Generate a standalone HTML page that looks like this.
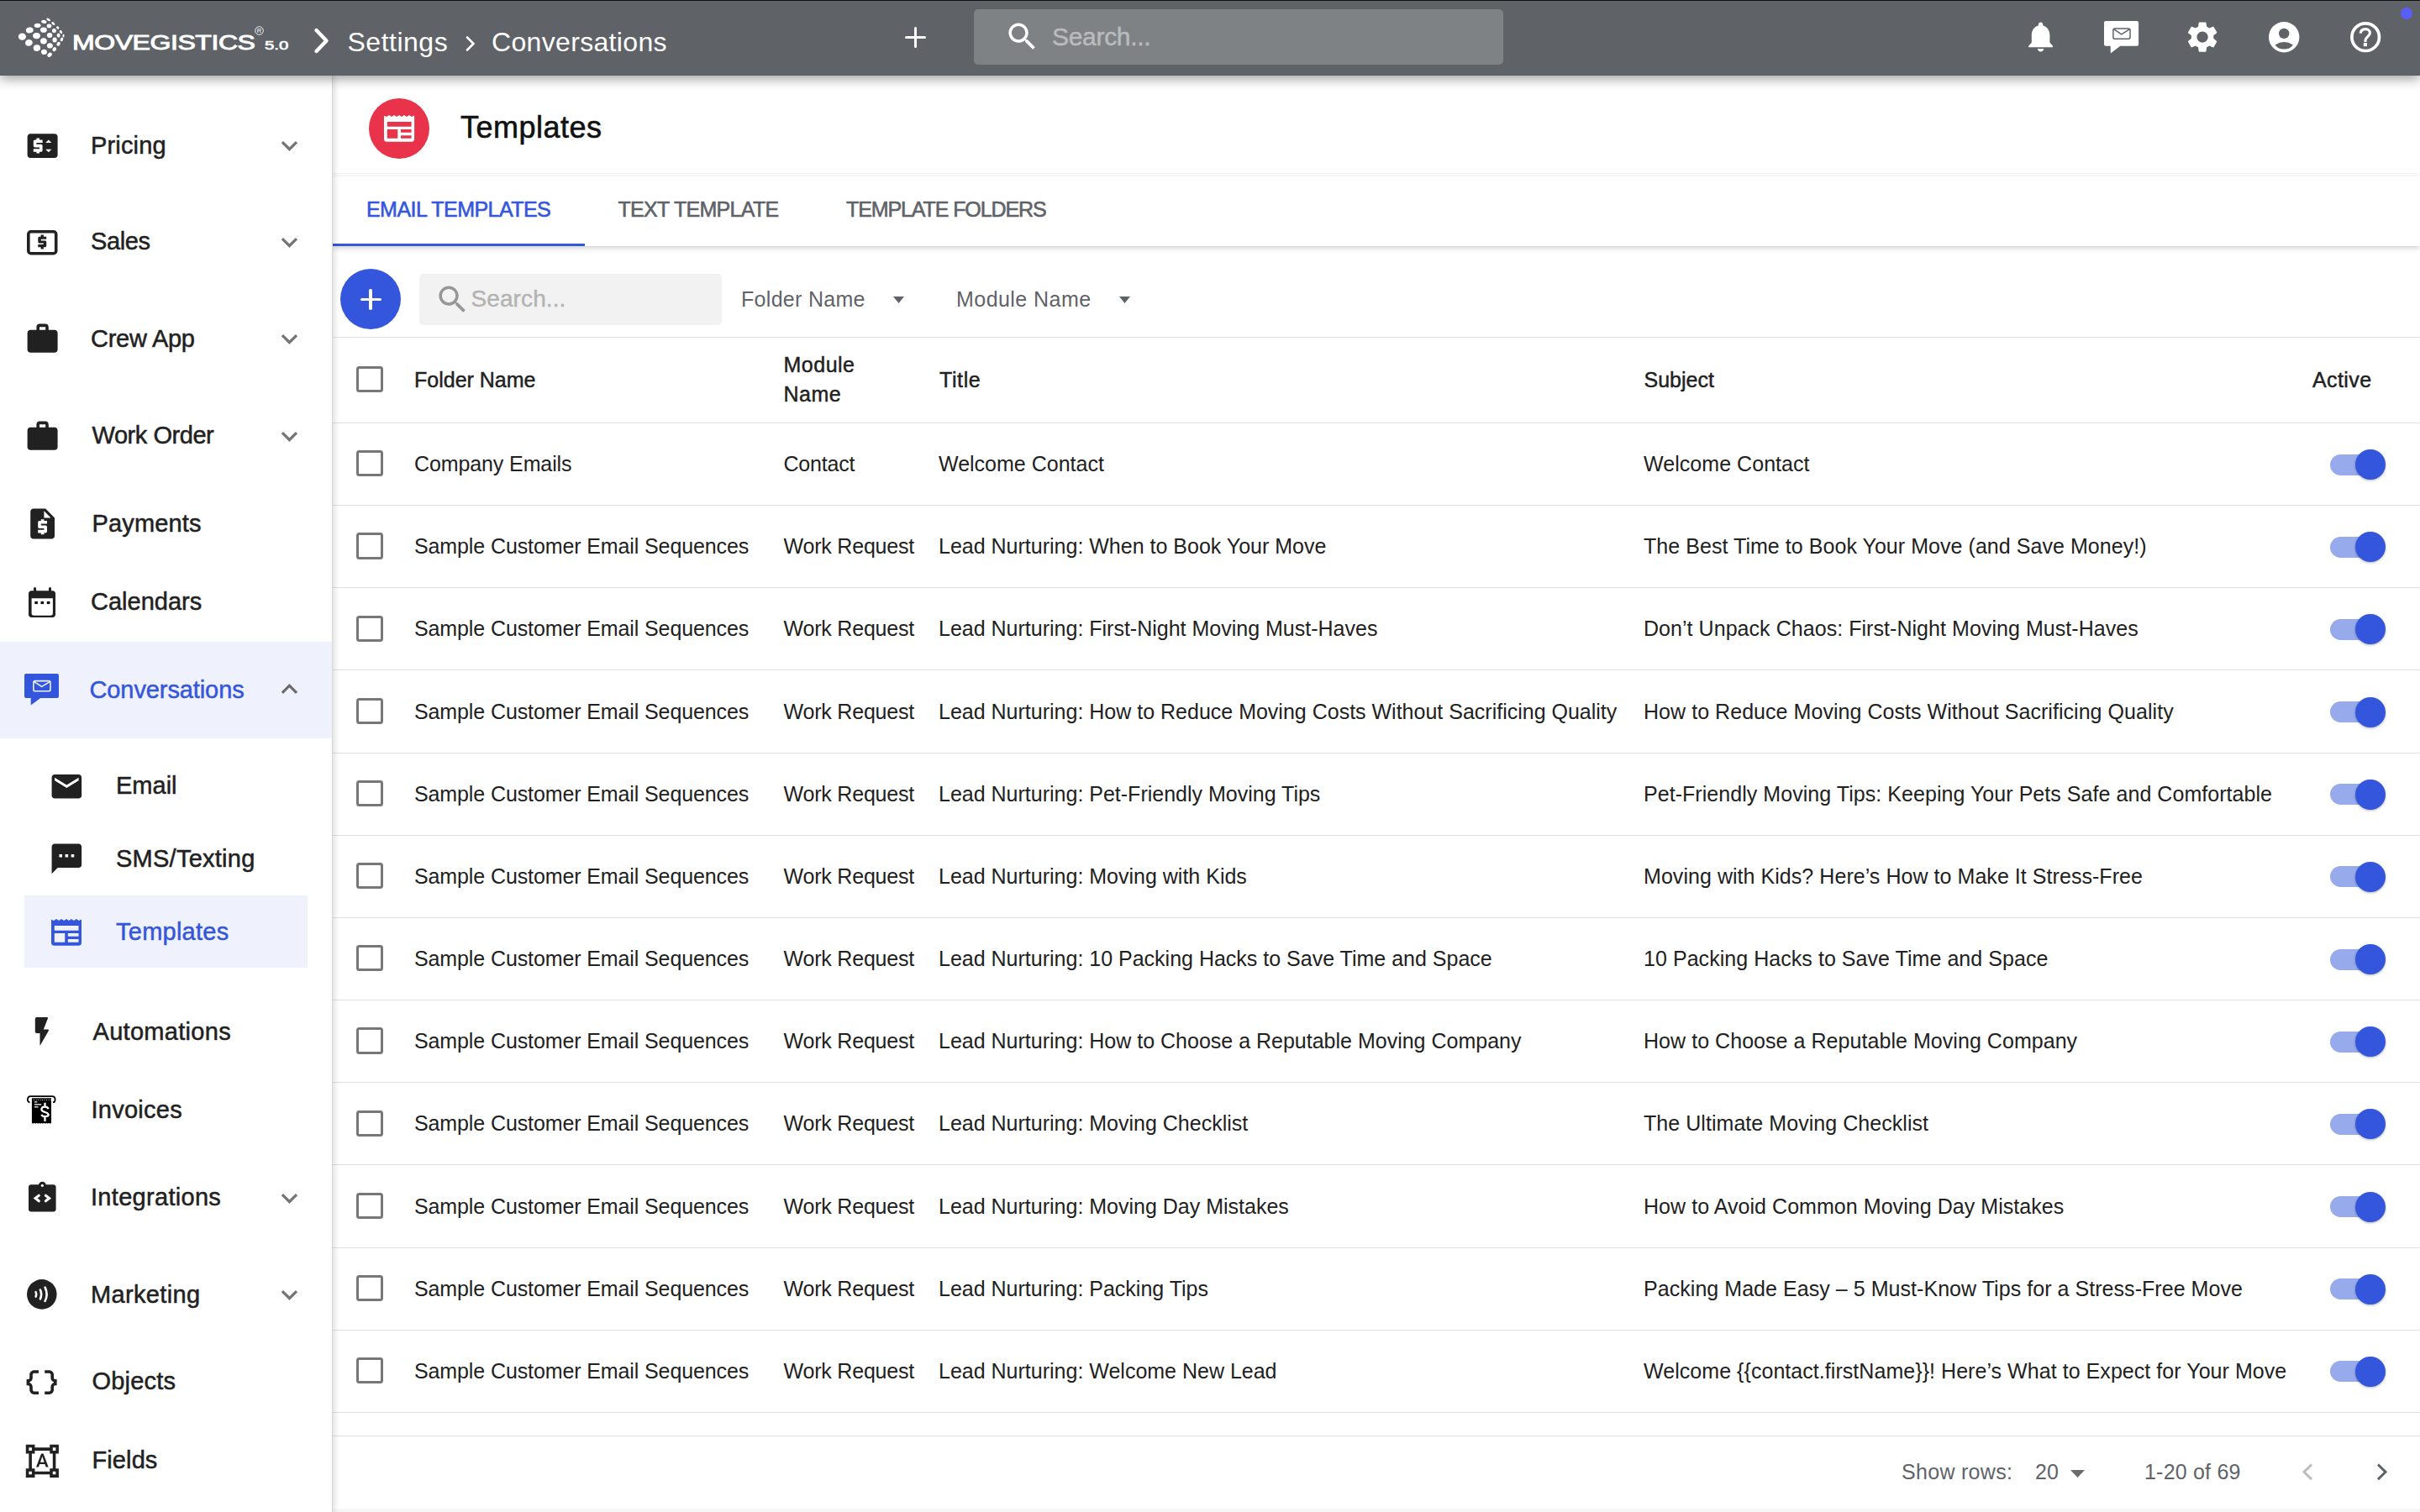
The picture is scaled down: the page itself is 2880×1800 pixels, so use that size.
<!DOCTYPE html><html><head><meta charset="utf-8"><style>
html,body{margin:0;padding:0;width:2880px;height:1800px;overflow:hidden;background:#fff;}
body{position:relative;font-family:"Liberation Sans", sans-serif;}
.t{position:absolute;white-space:nowrap;line-height:1;}
.i{position:absolute;overflow:visible;}
.b{position:absolute;}
</style></head><body>
<div class="b" style="left:0;top:90px;width:395px;height:1710px;background:#fff;border-right:1px solid #d9d9d9;box-shadow:2px 0 7px rgba(0,0,0,0.14);z-index:1"></div>
<div id="sb" class="b" style="left:0;top:0;width:396px;height:1800px;z-index:2">
<div class="b" style="left:0;top:764px;width:395px;height:115px;background:#eff2fd"></div>
<div class="b" style="left:29px;top:1066px;width:337px;height:86px;background:#eff2fd"></div>
<div class="t" style="left:108.0px;top:158.8px;font-size:29px;color:#212121;-webkit-text-stroke:0.5px #212121;letter-spacing:0.15px;">Pricing</div>
<svg class="i" style="left:325.0px;top:154.0px;width:38.9px;height:38.9px;" viewBox="0 0 24 24"><path fill="#757575" d="M16.59 8.59L12 13.17 7.41 8.59 6 10l6 6 6-6z"/></svg>
<div class="t" style="left:108.0px;top:273.3px;font-size:29px;color:#212121;-webkit-text-stroke:0.5px #212121;letter-spacing:-0.4px;">Sales</div>
<svg class="i" style="left:325.0px;top:268.5px;width:38.9px;height:38.9px;" viewBox="0 0 24 24"><path fill="#757575" d="M16.59 8.59L12 13.17 7.41 8.59 6 10l6 6 6-6z"/></svg>
<div class="t" style="left:108.0px;top:388.8px;font-size:29px;color:#212121;-webkit-text-stroke:0.5px #212121;letter-spacing:-0.25px;">Crew App</div>
<svg class="i" style="left:325.0px;top:384.0px;width:38.9px;height:38.9px;" viewBox="0 0 24 24"><path fill="#757575" d="M16.59 8.59L12 13.17 7.41 8.59 6 10l6 6 6-6z"/></svg>
<div class="t" style="left:109.5px;top:504.3px;font-size:29px;color:#212121;-webkit-text-stroke:0.5px #212121;letter-spacing:-0.45px;">Work Order</div>
<svg class="i" style="left:325.0px;top:499.5px;width:38.9px;height:38.9px;" viewBox="0 0 24 24"><path fill="#757575" d="M16.59 8.59L12 13.17 7.41 8.59 6 10l6 6 6-6z"/></svg>
<div class="t" style="left:109.5px;top:608.8px;font-size:29px;color:#212121;-webkit-text-stroke:0.5px #212121;letter-spacing:0.15px;">Payments</div>
<div class="t" style="left:108.0px;top:702.3px;font-size:29px;color:#212121;-webkit-text-stroke:0.5px #212121;">Calendars</div>
<div class="t" style="left:106.5px;top:806.8px;font-size:29px;color:#3456dc;-webkit-text-stroke:0.5px #3456dc;letter-spacing:-0.1px;">Conversations</div>
<svg class="i" style="left:325.0px;top:801.1px;width:38.9px;height:38.9px;" viewBox="0 0 24 24"><path fill="#6b6b6b" d="M12 8l-6 6 1.41 1.41L12 10.83l4.59 4.58L18 14z"/></svg>
<div class="t" style="left:110.5px;top:1213.9px;font-size:29px;color:#212121;-webkit-text-stroke:0.5px #212121;letter-spacing:0.3px;">Automations</div>
<div class="t" style="left:108.5px;top:1306.5px;font-size:29px;color:#212121;-webkit-text-stroke:0.5px #212121;letter-spacing:0.25px;">Invoices</div>
<div class="t" style="left:108.0px;top:1411.3px;font-size:29px;color:#212121;-webkit-text-stroke:0.5px #212121;letter-spacing:0.3px;">Integrations</div>
<svg class="i" style="left:325.0px;top:1406.5px;width:38.9px;height:38.9px;" viewBox="0 0 24 24"><path fill="#757575" d="M16.59 8.59L12 13.17 7.41 8.59 6 10l6 6 6-6z"/></svg>
<div class="t" style="left:108.0px;top:1526.6px;font-size:29px;color:#212121;-webkit-text-stroke:0.5px #212121;letter-spacing:0.35px;">Marketing</div>
<svg class="i" style="left:325.0px;top:1521.8px;width:38.9px;height:38.9px;" viewBox="0 0 24 24"><path fill="#757575" d="M16.59 8.59L12 13.17 7.41 8.59 6 10l6 6 6-6z"/></svg>
<div class="t" style="left:109.5px;top:1630.3px;font-size:29px;color:#212121;-webkit-text-stroke:0.5px #212121;letter-spacing:0.2px;">Objects</div>
<div class="t" style="left:109.5px;top:1724.1px;font-size:29px;color:#212121;-webkit-text-stroke:0.5px #212121;letter-spacing:0.1px;">Fields</div>
<div class="t" style="left:138.0px;top:921.4px;font-size:29px;color:#212121;-webkit-text-stroke:0.5px #212121;">Email</div>
<div class="t" style="left:138.0px;top:1007.9px;font-size:29px;color:#212121;-webkit-text-stroke:0.5px #212121;letter-spacing:0.25px;">SMS/Texting</div>
<div class="t" style="left:138.0px;top:1094.5px;font-size:29px;color:#3456dc;-webkit-text-stroke:0.5px #3456dc;letter-spacing:0.25px;">Templates</div>
<svg class="i" style="left:28.6px;top:151.8px;width:43.2px;height:43.2px;" viewBox="0 0 24 24"><path fill="#212121" d="M20 4H4c-1.11 0-1.99.89-1.99 2L2 18c0 1.11.89 2 2 2h16c1.11 0 2-.89 2-2V6c0-1.11-.89-2-2-2zm-8 6H8v1h3c.55 0 1 .45 1 1v3c0 .55-.45 1-1 1h-1v1H8v-1H6v-2h4v-1H7c-.55 0-1-.45-1-1V9c0-.55.45-1 1-1h1V7h2v1h2v2zm4 6.25l-2-2h4l-2 2zM14 10l2-2 2 2h-4z"/></svg>
<svg class="i" style="left:32.0px;top:273.5px;width:36.5px;height:29.5px;" viewBox="0 0 36.5 29.5"><rect x="1.8" y="1.8" width="32.9" height="25.9" rx="3" fill="none" stroke="#212121" stroke-width="3.6"/><path fill="#212121" d="M16.6 5.5h3.3v2.2h3.3v3.1h-6.4v1.6h4.6c1.2 0 1.8.6 1.8 1.8v4.2c0 1.2-.6 1.8-1.8 1.8h-1.5v2.2h-3.3v-2.2h-3.3v-3.1h6.4v-1.6h-4.6c-1.2 0-1.8-.6-1.8-1.8v-4.2c0-1.2.6-1.8 1.8-1.8h1.5z"/></svg>
<svg class="i" style="left:28.6px;top:382.1px;width:43.2px;height:43.2px;" viewBox="0 0 24 24"><path fill="#212121" d="M20 6h-4V4c0-1.11-.89-2-2-2h-4c-1.11 0-2 .89-2 2v2H4c-1.11 0-1.99.89-1.99 2L2 19c0 1.11.89 2 2 2h16c1.11 0 2-.89 2-2V8c0-1.11-.89-2-2-2zm-6 0h-4V4h4v2z"/></svg>
<svg class="i" style="left:28.6px;top:498.1px;width:43.2px;height:43.2px;" viewBox="0 0 24 24"><path fill="#212121" d="M20 6h-4V4c0-1.11-.89-2-2-2h-4c-1.11 0-2 .89-2 2v2H4c-1.11 0-1.99.89-1.99 2L2 19c0 1.11.89 2 2 2h16c1.11 0 2-.89 2-2V8c0-1.11-.89-2-2-2zm-6 0h-4V4h4v2z"/></svg>
<svg class="i" style="left:28.8px;top:601.6px;width:43.2px;height:43.2px;" viewBox="0 0 24 24"><path fill="#212121" d="M14 2H6c-1.1 0-1.99.9-1.99 2L4 20c0 1.1.89 2 1.99 2H18c1.1 0 2-.9 2-2V8l-6-6zm1 10h-4v1h3c.55 0 1 .45 1 1v3c0 .55-.45 1-1 1h-1v1h-2v-1H9v-2h4v-1h-3c-.55 0-1-.45-1-1v-3c0-.55.45-1 1-1h1V9h2v1h2v2zm-2-4V3.5L17.5 8H13z"/></svg>
<svg class="i" style="left:33.9px;top:699.4px;width:32.5px;height:36.1px;" viewBox="0 0 32.5 36.1"><path fill="#212121" d="M6 4.3V1.6a1.5 1.5 0 0 1 3 0V4.3H24V1.6a1.5 1.5 0 0 1 3 0V4.3h1.5c2.2 0 3.5 1.4 3.5 3.5v24.8c0 2.1-1.4 3.5-3.5 3.5h-25c-2.1 0-3.5-1.4-3.5-3.5V7.8c0-2.1 1.4-3.5 3.5-3.5zM3.6 13.3v17.8c0 1.8 .9 2.7 2.7 2.7h19.9c1.8 0 2.7-.9 2.7-2.7V13.3z"/><rect x="7.3" y="16.9" width="3.6" height="3.2" fill="#111"/><rect x="14.5" y="16.9" width="3.6" height="3.2" fill="#111"/><rect x="21.8" y="16.9" width="3.6" height="3.2" fill="#111"/></svg>
<svg class="i" style="left:28.9px;top:802.0px;width:41.0px;height:37.6px;" viewBox="0 0 41 37.6"><path fill="#3456dc" d="M2 0H39.00Q41 0 41 2V26.95Q41 28.95 39.00 28.95H19.27L7.79 37.6L7.67 28.95H2Q0 28.95 0 26.95V2Q0 0 2 0Z"/><rect x="10.87" y="8.65" width="20.09" height="12.03" rx="2.05" fill="none" stroke="#eff2fd" stroke-width="1.6"/><path d="M11.68 9.59L20.71 15.42L30.13 9.59" fill="none" stroke="#eff2fd" stroke-width="1.6"/></svg>
<svg class="i" style="left:57.5px;top:914.9px;width:42.7px;height:42.7px;" viewBox="0 0 24 24"><path fill="#212121" d="M20 4H4c-1.1 0-1.99.9-1.99 2L2 18c0 1.1.9 2 2 2h16c1.1 0 2-.9 2-2V6c0-1.1-.9-2-2-2zm0 4l-8 5-8-5V6l8 5 8-5v2z"/></svg>
<svg class="i" style="left:57.5px;top:1001.0px;width:42.7px;height:42.7px;" viewBox="0 0 24 24"><path fill="#212121" d="M20 2H4c-1.1 0-1.99.9-1.99 2L2 22l4-4h14c1.1 0 2-.9 2-2V4c0-1.1-.9-2-2-2zM9 11H7V9h2v2zm4 0h-2V9h2v2zm4 0h-2V9h2v2z"/></svg>
<svg class="i" style="left:61.0px;top:1093.9px;width:36.0px;height:31.7px;" viewBox="0 0 36.1 31.8"><path fill="#3456dc" fill-rule="evenodd" d="M0 0.8L3.0 2.1L6.1 0L9.1 2.1L12.0 0L15.2 2.1L18.1 0L21.0 2.1L24.0 0L27.0 2.1L30.0 0L32.9 2.1L36.1 0.6V28.3Q36.1 31.8 32.6 31.8H3.5Q0 31.8 0 28.3ZM3.8 8.1H32.6V13.8H3.8Z M3.8 17H16.3V27.8H3.8Z M19.9 17H32.6V20.8H19.9Z M19.9 24.2H32.6V27.8H19.9Z"/></svg>
<svg class="i" style="left:40.7px;top:1210.6px;width:17.4px;height:33.7px;" viewBox="0 0 17.4 33.7"><path fill="#212121" d="M0.8 1.8Q0.8 0 2.6 0H14.9Q16.4 0 15.9 1.4L10.8 14.5H16Q17.7 14.5 16.9 16L7 33.3Q6.5 34 6.5 33.1V19.1H2.6Q0.8 19.1 0.8 17.3Z"/></svg>
<svg class="i" style="left:32.0px;top:1304.0px;width:35.0px;height:34.0px;" viewBox="0 0 35 34"><path d="M3.6 8.3C1.5 8.3 0.9 6.8 0.9 5C0.9 2.5 2.2 1.2 4.5 1.2H30C32.3 1.2 33.6 2.5 33.6 5C33.6 6.8 33 8.3 30.9 8.3" fill="none" stroke="#000" stroke-width="1.8"/><path fill="#000" d="M5.9 3.3H29V33.5H5.9Z"/><circle cx="5.90" cy="33.9" r="0.9" fill="#fff"/><circle cx="8.80" cy="33.9" r="0.9" fill="#fff"/><circle cx="11.70" cy="33.9" r="0.9" fill="#fff"/><circle cx="14.60" cy="33.9" r="0.9" fill="#fff"/><circle cx="17.50" cy="33.9" r="0.9" fill="#fff"/><circle cx="20.40" cy="33.9" r="0.9" fill="#fff"/><circle cx="23.30" cy="33.9" r="0.9" fill="#fff"/><circle cx="26.20" cy="33.9" r="0.9" fill="#fff"/><circle cx="29.10" cy="33.9" r="0.9" fill="#fff"/><rect x="8.20" y="4.9" width="0.8" height="1" fill="#fff"/><rect x="10.70" y="4.9" width="0.8" height="1" fill="#fff"/><rect x="13.20" y="4.9" width="0.8" height="1" fill="#fff"/><rect x="15.70" y="4.9" width="0.8" height="1" fill="#fff"/><rect x="18.20" y="4.9" width="0.8" height="1" fill="#fff"/><rect x="20.70" y="4.9" width="0.8" height="1" fill="#fff"/><rect x="23.20" y="4.9" width="0.8" height="1" fill="#fff"/><rect x="25.70" y="4.9" width="0.8" height="1" fill="#fff"/><rect x="28.20" y="4.9" width="0.8" height="1" fill="#fff"/><path d="M9 7.8H12.3M9 10.8H17.2M9 13.9H13.5" stroke="#fff" stroke-width="1.3"/><path d="M25.6 16.2C25 14.6 23.5 13.7 21.5 13.7C19 13.7 17.4 15 17.4 16.8C17.4 18.6 19 19.3 21.5 20C24 20.7 25.7 21.6 25.7 23.3C25.7 25 24 25.1 21.5 25.1C19.3 25.1 17.9 24.3 17.4 22.8M21.5 8.8V13.7M21.5 25.1V31" fill="none" stroke="#fff" stroke-width="2.3"/></svg>
<svg class="i" style="left:34.0px;top:1407.0px;width:32.7px;height:35.5px;" viewBox="0 0 32.7 35.5"><path fill="#212121" d="M3 3.2H29.6c1.7 0 3 1.3 3 3V32.4c0 1.7-1.3 3-3 3H3c-1.7 0-3-1.3-3-3V6.2c0-1.7 1.3-3 3-3z"/><circle cx="16.4" cy="4.4" r="4.6" fill="#212121"/><circle cx="16.4" cy="4.3" r="1.6" fill="#fff"/><path d="M12.3 16.2L8.1 19.5L12.3 22.8M20.4 16.2L24.6 19.5L20.4 22.8" fill="none" stroke="#fff" stroke-width="3.1" stroke-linecap="round"/></svg>
<svg class="i" style="left:32.0px;top:1523.3px;width:35.6px;height:35.7px;" viewBox="0 0 35.6 35.7"><circle cx="17.8" cy="17.85" r="17.8" fill="#212121"/><path d="M10.6 15.2Q11.9 17.9 10.6 20.6M15.9 12.5Q18.4 17.9 15.9 23.4M21.6 9.6Q25.7 17.9 21.6 26" fill="none" stroke="#fff" stroke-width="2.6" stroke-linecap="round"/></svg>
<svg class="i" style="left:28.4px;top:1623.8px;width:43.2px;height:43.2px;" viewBox="0 0 24 24"><path fill="#212121" d="M4 7v2c0 .55-.45 1-1 1H2v4h1c.55 0 1 .45 1 1v2c0 1.65 1.35 3 3 3h3v-2H7c-.55 0-1-.45-1-1v-2c0-1.3-.84-2.42-2-2.83v-.34C5.16 11.42 6 10.3 6 9V7c0-.55.45-1 1-1h3V4H7C5.35 4 4 5.35 4 7zm17 3c-.55 0-1-.45-1-1V7c0-1.65-1.35-3-3-3h-3v2h3c.55 0 1 .45 1 1v2c0 1.3.84 2.42 2 2.83v.34c-1.16.41-2 1.52-2 2.83v2c0 .55-.45 1-1 1h-3v2h3c1.65 0 3-1.35 3-3v-2c0-.55.45-1 1-1h1v-4h-1z"/></svg>
<svg class="i" style="left:29.0px;top:1718.0px;width:42.7px;height:42.7px;" viewBox="0 0 24 24"><path fill="#212121" d="M23 7V1h-6v2H7V1H1v6h2v10H1v6h6v-2h10v2h6v-6h-2V7h2zM3 3h2v2H3V3zm2 18H3v-2h2v2zm12-2H7v-2H5V7h2V5h10v2h2v10h-2v2zm4 2h-2v-2h2v2zM19 5V3h2v2h-2zm-5.27 9h-3.49l-.73 2H7.89l3.4-9h1.4l3.41 9h-1.63l-.74-2zm-3.04-1.26h2.61L12 8.91l-1.31 3.83z"/></svg>
</div>
<div class="b" style="left:396px;top:206px;width:2484px;height:1px;background:#f8f8f8"></div>
<div class="b" style="left:396px;top:210px;width:2484px;height:83px;background:#fff;box-shadow:0 2px 7px rgba(0,0,0,0.2)"></div>
<div class="b" style="left:439px;top:117px;width:72px;height:72px;border-radius:50%;background:#e8334a"></div>
<svg class="i" style="left:457.0px;top:137.0px;width:36.1px;height:31.8px;" viewBox="0 0 36.1 31.8"><path fill="#fff" fill-rule="evenodd" d="M0 0.8L3.0 2.1L6.1 0L9.1 2.1L12.0 0L15.2 2.1L18.1 0L21.0 2.1L24.0 0L27.0 2.1L30.0 0L32.9 2.1L36.1 0.6V28.3Q36.1 31.8 32.6 31.8H3.5Q0 31.8 0 28.3ZM3.8 8.1H32.6V13.8H3.8Z M3.8 17H16.3V27.8H3.8Z M19.9 17H32.6V20.8H19.9Z M19.9 24.2H32.6V27.8H19.9Z"/></svg>
<div class="t" style="left:548.0px;top:133.9px;font-size:36px;color:#111;-webkit-text-stroke:0.6px #111;letter-spacing:0.5px;">Templates</div>
<div class="t" style="left:436.0px;top:237.1px;font-size:25px;color:#3456dc;-webkit-text-stroke:0.6px #3456dc;letter-spacing:-0.55px;">EMAIL TEMPLATES</div>
<div class="t" style="left:735.5px;top:237.1px;font-size:25px;color:#5f6368;-webkit-text-stroke:0.6px #5f6368;letter-spacing:-0.7px;">TEXT TEMPLATE</div>
<div class="t" style="left:1007.0px;top:237.1px;font-size:25px;color:#5f6368;-webkit-text-stroke:0.6px #5f6368;letter-spacing:-1.1px;">TEMPLATE FOLDERS</div>
<div class="b" style="left:396px;top:290px;width:300px;height:3px;background:#3456dc"></div>
<div class="b" style="left:405px;top:320px;width:72px;height:72px;border-radius:50%;background:#3456dc"></div>
<div class="b" style="left:428.6px;top:354.8px;width:25px;height:3.4px;background:#fff;border-radius:1.7px"></div>
<div class="b" style="left:439.3px;top:344px;width:3.4px;height:25px;background:#fff;border-radius:1.7px"></div>
<div class="b" style="left:499px;top:326px;width:360px;height:61px;background:#f2f2f2;border-radius:5px"></div>
<svg class="i" style="left:516.5px;top:334.7px;width:43.2px;height:43.2px;" viewBox="0 0 24 24"><path fill="#979797" d="M15.5 14h-.79l-.28-.27C15.41 12.59 16 11.11 16 9.5 16 5.91 13.09 3 9.5 3S3 5.91 3 9.5 5.91 16 9.5 16c1.61 0 3.09-.59 4.23-1.57l.27.28v.79l5 4.99L20.49 19l-4.99-5zm-6 0C7.01 14 5 11.99 5 9.5S7.01 5 9.5 5 14 7.01 14 9.5 11.99 14 9.5 14z"/></svg>
<div class="t" style="left:560.5px;top:342.1px;font-size:28px;color:#b3b3b3;-webkit-text-stroke:0.4px #b3b3b3;letter-spacing:0.1px;">Search...</div>
<div class="t" style="left:882.0px;top:343.9px;font-size:25px;color:#5f6368;letter-spacing:0.3px;">Folder Name</div>
<svg class="i" style="left:1063.0px;top:352.7px;width:13.0px;height:8.1px;" viewBox="0 0 13 8.1"><path fill="#5f6368" d="M0 0H13L6.5 8.1Z"/></svg>
<div class="t" style="left:1138.0px;top:343.9px;font-size:25px;color:#5f6368;letter-spacing:0.45px;">Module Name</div>
<svg class="i" style="left:1332.0px;top:352.7px;width:13.0px;height:8.1px;" viewBox="0 0 13 8.1"><path fill="#5f6368" d="M0 0H13L6.5 8.1Z"/></svg>
<div class="b" style="left:396px;top:401px;width:2484px;height:1px;background:#e3e3e3"></div>
<div class="b" style="left:396px;top:503px;width:2484px;height:1px;background:#e0e0e0"></div>
<div class="b" style="left:396px;top:601.0px;width:2484px;height:1px;background:#e0e0e0"></div>
<div class="b" style="left:396px;top:699.2px;width:2484px;height:1px;background:#e0e0e0"></div>
<div class="b" style="left:396px;top:797.3px;width:2484px;height:1px;background:#e0e0e0"></div>
<div class="b" style="left:396px;top:895.5px;width:2484px;height:1px;background:#e0e0e0"></div>
<div class="b" style="left:396px;top:993.7px;width:2484px;height:1px;background:#e0e0e0"></div>
<div class="b" style="left:396px;top:1091.9px;width:2484px;height:1px;background:#e0e0e0"></div>
<div class="b" style="left:396px;top:1190.1px;width:2484px;height:1px;background:#e0e0e0"></div>
<div class="b" style="left:396px;top:1288.2px;width:2484px;height:1px;background:#e0e0e0"></div>
<div class="b" style="left:396px;top:1386.4px;width:2484px;height:1px;background:#e0e0e0"></div>
<div class="b" style="left:396px;top:1484.6px;width:2484px;height:1px;background:#e0e0e0"></div>
<div class="b" style="left:396px;top:1582.8px;width:2484px;height:1px;background:#e0e0e0"></div>
<div class="b" style="left:396px;top:1681.0px;width:2484px;height:1px;background:#e0e0e0"></div>
<div class="b" style="left:396px;top:1709px;width:2484px;height:1px;background:#e0e0e0"></div>
<div class="b" style="left:424.4px;top:436.1px;width:25.3px;height:25.3px;border:3.5px solid #777;border-radius:3.5px"></div>
<div class="t" style="left:493.0px;top:440.0px;font-size:25px;color:#212121;-webkit-text-stroke:0.45px #212121;">Folder Name</div>
<div class="t" style="left:932.5px;top:421.8px;font-size:25px;color:#212121;-webkit-text-stroke:0.45px #212121;letter-spacing:0.5px;">Module</div>
<div class="t" style="left:932.5px;top:457.4px;font-size:25px;color:#212121;-webkit-text-stroke:0.45px #212121;letter-spacing:0.5px;">Name</div>
<div class="t" style="left:1118.0px;top:439.7px;font-size:25px;color:#212121;-webkit-text-stroke:0.45px #212121;letter-spacing:0.6px;">Title</div>
<div class="t" style="left:1956.5px;top:439.5px;font-size:25px;color:#212121;-webkit-text-stroke:0.45px #212121;">Subject</div>
<div class="t" style="left:2752.0px;top:439.9px;font-size:25px;color:#212121;-webkit-text-stroke:0.45px #212121;letter-spacing:0.4px;">Active</div>
<div class="b" style="left:424.4px;top:536.1px;width:25.3px;height:25.3px;border:3.5px solid #777;border-radius:3.5px"></div>
<div class="t" style="left:493.0px;top:539.9px;font-size:25px;color:#212121;letter-spacing:-0.11px;">Company Emails</div>
<div class="t" style="left:932.5px;top:539.9px;font-size:25px;color:#212121;letter-spacing:-0.2px;">Contact</div>
<div class="t" style="left:1117.0px;top:539.9px;font-size:25px;color:#212121;">Welcome Contact</div>
<div class="t" style="left:1956.0px;top:539.9px;font-size:25px;color:#212121;letter-spacing:0.05px;">Welcome Contact</div>
<div class="b" style="left:2773px;top:540.5px;width:64px;height:25px;border-radius:12.5px;background:#97aaec"></div>
<div class="b" style="left:2803px;top:535.0px;width:36px;height:36px;border-radius:50%;background:#3456dc;box-shadow:0 1px 3px rgba(0,0,0,0.3)"></div>
<div class="b" style="left:424.4px;top:634.3px;width:25.3px;height:25.3px;border:3.5px solid #777;border-radius:3.5px"></div>
<div class="t" style="left:493.0px;top:638.1px;font-size:25px;color:#212121;letter-spacing:-0.11px;">Sample Customer Email Sequences</div>
<div class="t" style="left:932.5px;top:638.1px;font-size:25px;color:#212121;letter-spacing:-0.2px;">Work Request</div>
<div class="t" style="left:1117.0px;top:638.1px;font-size:25px;color:#212121;">Lead Nurturing: When to Book Your Move</div>
<div class="t" style="left:1956.0px;top:638.1px;font-size:25px;color:#212121;letter-spacing:0.05px;">The Best Time to Book Your Move (and Save Money!)</div>
<div class="b" style="left:2773px;top:638.6px;width:64px;height:25px;border-radius:12.5px;background:#97aaec"></div>
<div class="b" style="left:2803px;top:633.1px;width:36px;height:36px;border-radius:50%;background:#3456dc;box-shadow:0 1px 3px rgba(0,0,0,0.3)"></div>
<div class="b" style="left:424.4px;top:732.5px;width:25.3px;height:25.3px;border:3.5px solid #777;border-radius:3.5px"></div>
<div class="t" style="left:493.0px;top:736.3px;font-size:25px;color:#212121;letter-spacing:-0.11px;">Sample Customer Email Sequences</div>
<div class="t" style="left:932.5px;top:736.3px;font-size:25px;color:#212121;letter-spacing:-0.2px;">Work Request</div>
<div class="t" style="left:1117.0px;top:736.3px;font-size:25px;color:#212121;">Lead Nurturing: First-Night Moving Must-Haves</div>
<div class="t" style="left:1956.0px;top:736.3px;font-size:25px;color:#212121;letter-spacing:0.05px;">Don’t Unpack Chaos: First-Night Moving Must-Haves</div>
<div class="b" style="left:2773px;top:736.8px;width:64px;height:25px;border-radius:12.5px;background:#97aaec"></div>
<div class="b" style="left:2803px;top:731.3px;width:36px;height:36px;border-radius:50%;background:#3456dc;box-shadow:0 1px 3px rgba(0,0,0,0.3)"></div>
<div class="b" style="left:424.4px;top:830.7px;width:25.3px;height:25.3px;border:3.5px solid #777;border-radius:3.5px"></div>
<div class="t" style="left:493.0px;top:834.5px;font-size:25px;color:#212121;letter-spacing:-0.11px;">Sample Customer Email Sequences</div>
<div class="t" style="left:932.5px;top:834.5px;font-size:25px;color:#212121;letter-spacing:-0.2px;">Work Request</div>
<div class="t" style="left:1117.0px;top:834.5px;font-size:25px;color:#212121;">Lead Nurturing: How to Reduce Moving Costs Without Sacrificing Quality</div>
<div class="t" style="left:1956.0px;top:834.5px;font-size:25px;color:#212121;letter-spacing:0.05px;">How to Reduce Moving Costs Without Sacrificing Quality</div>
<div class="b" style="left:2773px;top:835.0px;width:64px;height:25px;border-radius:12.5px;background:#97aaec"></div>
<div class="b" style="left:2803px;top:829.5px;width:36px;height:36px;border-radius:50%;background:#3456dc;box-shadow:0 1px 3px rgba(0,0,0,0.3)"></div>
<div class="b" style="left:424.4px;top:928.9px;width:25.3px;height:25.3px;border:3.5px solid #777;border-radius:3.5px"></div>
<div class="t" style="left:493.0px;top:932.7px;font-size:25px;color:#212121;letter-spacing:-0.11px;">Sample Customer Email Sequences</div>
<div class="t" style="left:932.5px;top:932.7px;font-size:25px;color:#212121;letter-spacing:-0.2px;">Work Request</div>
<div class="t" style="left:1117.0px;top:932.7px;font-size:25px;color:#212121;">Lead Nurturing: Pet-Friendly Moving Tips</div>
<div class="t" style="left:1956.0px;top:932.7px;font-size:25px;color:#212121;letter-spacing:0.05px;">Pet-Friendly Moving Tips: Keeping Your Pets Safe and Comfortable</div>
<div class="b" style="left:2773px;top:933.2px;width:64px;height:25px;border-radius:12.5px;background:#97aaec"></div>
<div class="b" style="left:2803px;top:927.7px;width:36px;height:36px;border-radius:50%;background:#3456dc;box-shadow:0 1px 3px rgba(0,0,0,0.3)"></div>
<div class="b" style="left:424.4px;top:1027.1px;width:25.3px;height:25.3px;border:3.5px solid #777;border-radius:3.5px"></div>
<div class="t" style="left:493.0px;top:1030.8px;font-size:25px;color:#212121;letter-spacing:-0.11px;">Sample Customer Email Sequences</div>
<div class="t" style="left:932.5px;top:1030.8px;font-size:25px;color:#212121;letter-spacing:-0.2px;">Work Request</div>
<div class="t" style="left:1117.0px;top:1030.8px;font-size:25px;color:#212121;">Lead Nurturing: Moving with Kids</div>
<div class="t" style="left:1956.0px;top:1030.8px;font-size:25px;color:#212121;letter-spacing:0.05px;">Moving with Kids? Here’s How to Make It Stress-Free</div>
<div class="b" style="left:2773px;top:1031.4px;width:64px;height:25px;border-radius:12.5px;background:#97aaec"></div>
<div class="b" style="left:2803px;top:1025.9px;width:36px;height:36px;border-radius:50%;background:#3456dc;box-shadow:0 1px 3px rgba(0,0,0,0.3)"></div>
<div class="b" style="left:424.4px;top:1125.2px;width:25.3px;height:25.3px;border:3.5px solid #777;border-radius:3.5px"></div>
<div class="t" style="left:493.0px;top:1129.0px;font-size:25px;color:#212121;letter-spacing:-0.11px;">Sample Customer Email Sequences</div>
<div class="t" style="left:932.5px;top:1129.0px;font-size:25px;color:#212121;letter-spacing:-0.2px;">Work Request</div>
<div class="t" style="left:1117.0px;top:1129.0px;font-size:25px;color:#212121;">Lead Nurturing: 10 Packing Hacks to Save Time and Space</div>
<div class="t" style="left:1956.0px;top:1129.0px;font-size:25px;color:#212121;letter-spacing:0.05px;">10 Packing Hacks to Save Time and Space</div>
<div class="b" style="left:2773px;top:1129.5px;width:64px;height:25px;border-radius:12.5px;background:#97aaec"></div>
<div class="b" style="left:2803px;top:1124.0px;width:36px;height:36px;border-radius:50%;background:#3456dc;box-shadow:0 1px 3px rgba(0,0,0,0.3)"></div>
<div class="b" style="left:424.4px;top:1223.4px;width:25.3px;height:25.3px;border:3.5px solid #777;border-radius:3.5px"></div>
<div class="t" style="left:493.0px;top:1227.2px;font-size:25px;color:#212121;letter-spacing:-0.11px;">Sample Customer Email Sequences</div>
<div class="t" style="left:932.5px;top:1227.2px;font-size:25px;color:#212121;letter-spacing:-0.2px;">Work Request</div>
<div class="t" style="left:1117.0px;top:1227.2px;font-size:25px;color:#212121;">Lead Nurturing: How to Choose a Reputable Moving Company</div>
<div class="t" style="left:1956.0px;top:1227.2px;font-size:25px;color:#212121;letter-spacing:0.05px;">How to Choose a Reputable Moving Company</div>
<div class="b" style="left:2773px;top:1227.7px;width:64px;height:25px;border-radius:12.5px;background:#97aaec"></div>
<div class="b" style="left:2803px;top:1222.2px;width:36px;height:36px;border-radius:50%;background:#3456dc;box-shadow:0 1px 3px rgba(0,0,0,0.3)"></div>
<div class="b" style="left:424.4px;top:1321.6px;width:25.3px;height:25.3px;border:3.5px solid #777;border-radius:3.5px"></div>
<div class="t" style="left:493.0px;top:1325.4px;font-size:25px;color:#212121;letter-spacing:-0.11px;">Sample Customer Email Sequences</div>
<div class="t" style="left:932.5px;top:1325.4px;font-size:25px;color:#212121;letter-spacing:-0.2px;">Work Request</div>
<div class="t" style="left:1117.0px;top:1325.4px;font-size:25px;color:#212121;">Lead Nurturing: Moving Checklist</div>
<div class="t" style="left:1956.0px;top:1325.4px;font-size:25px;color:#212121;letter-spacing:0.05px;">The Ultimate Moving Checklist</div>
<div class="b" style="left:2773px;top:1325.9px;width:64px;height:25px;border-radius:12.5px;background:#97aaec"></div>
<div class="b" style="left:2803px;top:1320.4px;width:36px;height:36px;border-radius:50%;background:#3456dc;box-shadow:0 1px 3px rgba(0,0,0,0.3)"></div>
<div class="b" style="left:424.4px;top:1419.8px;width:25.3px;height:25.3px;border:3.5px solid #777;border-radius:3.5px"></div>
<div class="t" style="left:493.0px;top:1423.6px;font-size:25px;color:#212121;letter-spacing:-0.11px;">Sample Customer Email Sequences</div>
<div class="t" style="left:932.5px;top:1423.6px;font-size:25px;color:#212121;letter-spacing:-0.2px;">Work Request</div>
<div class="t" style="left:1117.0px;top:1423.6px;font-size:25px;color:#212121;">Lead Nurturing: Moving Day Mistakes</div>
<div class="t" style="left:1956.0px;top:1423.6px;font-size:25px;color:#212121;letter-spacing:0.05px;">How to Avoid Common Moving Day Mistakes</div>
<div class="b" style="left:2773px;top:1424.1px;width:64px;height:25px;border-radius:12.5px;background:#97aaec"></div>
<div class="b" style="left:2803px;top:1418.6px;width:36px;height:36px;border-radius:50%;background:#3456dc;box-shadow:0 1px 3px rgba(0,0,0,0.3)"></div>
<div class="b" style="left:424.4px;top:1518.0px;width:25.3px;height:25.3px;border:3.5px solid #777;border-radius:3.5px"></div>
<div class="t" style="left:493.0px;top:1521.7px;font-size:25px;color:#212121;letter-spacing:-0.11px;">Sample Customer Email Sequences</div>
<div class="t" style="left:932.5px;top:1521.7px;font-size:25px;color:#212121;letter-spacing:-0.2px;">Work Request</div>
<div class="t" style="left:1117.0px;top:1521.7px;font-size:25px;color:#212121;">Lead Nurturing: Packing Tips</div>
<div class="t" style="left:1956.0px;top:1521.7px;font-size:25px;color:#212121;letter-spacing:0.05px;">Packing Made Easy – 5 Must-Know Tips for a Stress-Free Move</div>
<div class="b" style="left:2773px;top:1522.3px;width:64px;height:25px;border-radius:12.5px;background:#97aaec"></div>
<div class="b" style="left:2803px;top:1516.8px;width:36px;height:36px;border-radius:50%;background:#3456dc;box-shadow:0 1px 3px rgba(0,0,0,0.3)"></div>
<div class="b" style="left:424.4px;top:1616.1px;width:25.3px;height:25.3px;border:3.5px solid #777;border-radius:3.5px"></div>
<div class="t" style="left:493.0px;top:1619.9px;font-size:25px;color:#212121;letter-spacing:-0.11px;">Sample Customer Email Sequences</div>
<div class="t" style="left:932.5px;top:1619.9px;font-size:25px;color:#212121;letter-spacing:-0.2px;">Work Request</div>
<div class="t" style="left:1117.0px;top:1619.9px;font-size:25px;color:#212121;">Lead Nurturing: Welcome New Lead</div>
<div class="t" style="left:1956.0px;top:1619.9px;font-size:25px;color:#212121;letter-spacing:0.05px;">Welcome {{contact.firstName}}! Here’s What to Expect for Your Move</div>
<div class="b" style="left:2773px;top:1620.4px;width:64px;height:25px;border-radius:12.5px;background:#97aaec"></div>
<div class="b" style="left:2803px;top:1614.9px;width:36px;height:36px;border-radius:50%;background:#3456dc;box-shadow:0 1px 3px rgba(0,0,0,0.3)"></div>
<div class="t" style="left:2263.0px;top:1740.2px;font-size:25px;color:#5f6368;letter-spacing:0.3px;">Show rows:</div>
<div class="t" style="left:2422.0px;top:1740.2px;font-size:25px;color:#5f6368;">20</div>
<svg class="i" style="left:2464.3px;top:1749.7px;width:17.0px;height:9.0px;" viewBox="0 0 17 9"><path fill="#6b6b6b" d="M0 0H17L8.5 9Z"/></svg>
<div class="t" style="left:2552.0px;top:1740.2px;font-size:25px;color:#5f6368;letter-spacing:0.2px;">1-20 of 69</div>
<svg class="i" style="left:2739.0px;top:1742.3px;width:14.0px;height:20.7px;" viewBox="0 0 14 20.7"><path d="M12 1.5L3 10.35 12 19.2" fill="none" stroke="#bdbdbd" stroke-width="3"/></svg>
<svg class="i" style="left:2827.5px;top:1742.3px;width:14.0px;height:20.7px;" viewBox="0 0 14 20.7"><path d="M2 1.5L11 10.35 2 19.2" fill="none" stroke="#5f6368" stroke-width="3"/></svg>
<div class="b" style="left:396px;top:1796px;width:2484px;height:4px;background:#f6f6f6"></div>
<div class="b" style="left:0;top:0;width:2880px;height:90px;background:#5f6368;box-shadow:0 4px 13px rgba(0,0,0,0.38);z-index:5">
<div class="b" style="left:0;top:0;width:2880px;height:1.3px;background:#111"></div>
<svg class="i" style="left:0.0px;top:0.0px;width:90.0px;height:90.0px;" viewBox="0 0 90 90"><ellipse cx="26.4" cy="43.7" rx="4.6" ry="4.1" transform="rotate(0 26.4 43.7)" fill="#fff"/><ellipse cx="35.3" cy="35.9" rx="4.4" ry="3.4" transform="rotate(-10 35.3 35.9)" fill="#fff"/><ellipse cx="34.4" cy="50.9" rx="4.4" ry="3.9" transform="rotate(-10 34.4 50.9)" fill="#fff"/><ellipse cx="44.6" cy="30.3" rx="3.9" ry="2.6" transform="rotate(0 44.6 30.3)" fill="#fff"/><ellipse cx="43.5" cy="42.6" rx="4.4" ry="3.7" transform="rotate(0 43.5 42.6)" fill="#fff"/><ellipse cx="43.9" cy="57.1" rx="4.2" ry="3.9" transform="rotate(-10 43.9 57.1)" fill="#fff"/><ellipse cx="52.3" cy="25.9" rx="3.2" ry="2.0" transform="rotate(10 52.3 25.9)" fill="#fff"/><ellipse cx="51.9" cy="35.7" rx="3.9" ry="3.1" transform="rotate(0 51.9 35.7)" fill="#fff"/><ellipse cx="51.9" cy="48.9" rx="3.9" ry="3.6" transform="rotate(-10 51.9 48.9)" fill="#fff"/><ellipse cx="52.5" cy="61.9" rx="3.5" ry="3.1" transform="rotate(-10 52.5 61.9)" fill="#fff"/><ellipse cx="57.6" cy="23.4" rx="2.6" ry="1.4" transform="rotate(30 57.6 23.4)" fill="#fff"/><ellipse cx="58.5" cy="30.9" rx="2.8" ry="2.3" transform="rotate(0 58.5 30.9)" fill="#fff"/><ellipse cx="59.1" cy="41.9" rx="3.2" ry="3.0" transform="rotate(0 59.1 41.9)" fill="#fff"/><ellipse cx="59.4" cy="54.4" rx="3.5" ry="3.1" transform="rotate(-10 59.4 54.4)" fill="#fff"/><ellipse cx="59.1" cy="65.3" rx="3.0" ry="2.2" transform="rotate(-40 59.1 65.3)" fill="#fff"/><ellipse cx="63.4" cy="28" rx="2.4" ry="1.4" transform="rotate(40 63.4 28)" fill="#fff"/><ellipse cx="64.4" cy="36.4" rx="2.5" ry="2.5" transform="rotate(0 64.4 36.4)" fill="#fff"/><ellipse cx="65.1" cy="47.6" rx="2.6" ry="3.0" transform="rotate(0 65.1 47.6)" fill="#fff"/><ellipse cx="64.8" cy="58.7" rx="2.6" ry="2.2" transform="rotate(-50 64.8 58.7)" fill="#fff"/><ellipse cx="68.7" cy="33" rx="1.8" ry="1.5" transform="rotate(50 68.7 33)" fill="#fff"/><ellipse cx="69.6" cy="42.1" rx="2.0" ry="2.6" transform="rotate(0 69.6 42.1)" fill="#fff"/><ellipse cx="69.6" cy="52.3" rx="2.0" ry="2.6" transform="rotate(30 69.6 52.3)" fill="#fff"/><ellipse cx="72.5" cy="38" rx="1.5" ry="2.2" transform="rotate(-30 72.5 38)" fill="#fff"/><ellipse cx="73.5" cy="46.9" rx="1.6" ry="2.5" transform="rotate(20 73.5 46.9)" fill="#fff"/><ellipse cx="75.5" cy="42.5" rx="1.0" ry="2.0" transform="rotate(0 75.5 42.5)" fill="#fff"/></svg>
<div class="t" style="left:86px;top:39.7px;font-size:23.5px;font-weight:normal;-webkit-text-stroke:0.9px #fff;color:#fff;transform:scaleX(1.36);transform-origin:0 0;letter-spacing:-0.3px">MOVEGISTICS</div>
<svg class="i" style="left:303px;top:31px;width:11px;height:11px" viewBox="0 0 11 11"><circle cx="5.5" cy="5.5" r="4.8" fill="none" stroke="#fff" stroke-width="0.9"/><text x="5.5" y="8.3" font-size="7.5" font-family="Liberation Sans" fill="#fff" text-anchor="middle">R</text></svg>
<div class="t" style="left:315px;top:45.5px;font-size:15px;font-weight:normal;-webkit-text-stroke:0.6px #fff;color:#fff;transform:scaleX(1.36);transform-origin:0 0">5.0</div>
<svg class="i" style="left:372.0px;top:32.0px;width:22.0px;height:33.0px;" viewBox="0 0 22 33"><path d="M4.5 4L16.5 16.5 4.5 29" fill="none" stroke="#fff" stroke-width="4.4" stroke-linecap="round" stroke-linejoin="round"/></svg>
<div class="t" style="left:413.5px;top:34.4px;font-size:32px;color:#fff;letter-spacing:0.5px;">Settings</div>
<svg class="i" style="left:553.0px;top:42.0px;width:14.0px;height:20.0px;" viewBox="0 0 14 20"><path d="M3 2.5L10.5 10 3 17.5" fill="none" stroke="#fff" stroke-width="2.6" stroke-linecap="round"/></svg>
<div class="t" style="left:585.0px;top:34.4px;font-size:32px;color:#fff;letter-spacing:0.33px;">Conversations</div>
<div class="b" style="left:1076.6px;top:43px;width:25.3px;height:3px;background:#fff;border-radius:1.5px"></div>
<div class="b" style="left:1087.7px;top:32px;width:3px;height:25.3px;background:#fff;border-radius:1.5px"></div>
<div class="b" style="left:1159px;top:11px;width:630px;height:66px;background:#7f8285;border-radius:5px"></div>
<svg class="i" style="left:1194.8px;top:21.5px;width:43.2px;height:43.2px;" viewBox="0 0 24 24"><path fill="#fff" d="M15.5 14h-.79l-.28-.27C15.41 12.59 16 11.11 16 9.5 16 5.91 13.09 3 9.5 3S3 5.91 3 9.5 5.91 16 9.5 16c1.61 0 3.09-.59 4.23-1.57l.27.28v.79l5 4.99L20.49 19l-4.99-5zm-6 0C7.01 14 5 11.99 5 9.5S7.01 5 9.5 5 14 7.01 14 9.5 11.99 14 9.5 14z"/></svg>
<div class="t" style="left:1252.0px;top:28.6px;font-size:30px;color:#b9bbbd;-webkit-text-stroke:0.5px #b9bbbd;letter-spacing:-0.3px;">Search...</div>
<svg class="i" style="left:2406.8px;top:22.4px;width:43.2px;height:43.2px;" viewBox="0 0 24 24"><path fill="#fff" d="M12 22c1.1 0 2-.9 2-2h-4c0 1.1.89 2 2 2zm6-6v-5c0-3.07-1.64-5.64-4.5-6.32V4c0-.83-.67-1.5-1.5-1.5s-1.5.67-1.5 1.5v.68C7.63 5.36 6 7.92 6 11v5l-2 2v1h16v-1l-2-2z"/></svg>
<svg class="i" style="left:2504.0px;top:25.0px;width:41.1px;height:38.6px;" viewBox="0 0 41.1 38.6"><path fill="#fff" d="M2 0H39.10Q41.1 0 41.1 2V27.72Q41.1 29.72 39.10 29.72H19.32L7.81 38.6L7.69 29.72H2Q0 29.72 0 27.72V2Q0 0 2 0Z"/><rect x="10.89" y="8.88" width="20.14" height="12.35" rx="2.06" fill="none" stroke="#5f6368" stroke-width="1.5"/><path d="M11.71 9.84L20.76 15.83L30.21 9.84" fill="none" stroke="#5f6368" stroke-width="1.5"/></svg>
<svg class="i" style="left:2598.6px;top:22.0px;width:44.2px;height:44.2px;" viewBox="0 0 24 24"><path fill="#fff" d="M19.14 12.94c.04-.3.06-.61.06-.94 0-.32-.02-.64-.07-.94l2.03-1.58c.18-.14.23-.41.12-.61l-1.92-3.32c-.12-.22-.37-.29-.59-.22l-2.39.96c-.5-.38-1.03-.7-1.62-.94l-.36-2.54c-.04-.24-.24-.41-.48-.41h-3.84c-.24 0-.43.17-.47.41l-.36 2.540c-.59.24-1.13.57-1.62.94l-2.39-.96c-.22-.08-.47 0-.59.22L2.74 8.87c-.12.21-.08.47.12.61l2.03 1.58c-.05.3-.09.63-.09.94s.02.64.07.94l-2.03 1.58c-.18.14-.23.41-.12.61l1.92 3.32c.12.22.37.29.59.22l2.39-.96c.5.38 1.03.7 1.62.94l.36 2.54c.05.24.24.41.48.41h3.840c.24 0 .44-.17.47-.41l.36-2.54c.59-.24 1.13-.56 1.62-.94l2.39.96c.22.08.47 0 .59-.22l1.92-3.32c.12-.22.07-.47-.12-.61l-2.01-1.58zM12 15.6c-1.98 0-3.6-1.620-3.6-3.6s1.62-3.6 3.6-3.6 3.6 1.62 3.6 3.6-1.62 3.6-3.6 3.6z"/></svg>
<svg class="i" style="left:2699.8px;top:25.8px;width:36.4px;height:36.4px;" viewBox="0 0 36.4 36.4"><circle cx="18.2" cy="18.2" r="18.2" fill="#fff"/><circle cx="18.2" cy="13.9" r="6.2" fill="#5f6368"/><path d="M7.5 27.4Q18.2 20.7 29 27.4Q24.8 32.6 18.2 32.6Q11.6 32.6 7.5 27.4Z" fill="#5f6368"/></svg>
<svg class="i" style="left:2797.0px;top:25.8px;width:36.4px;height:36.4px;" viewBox="0 0 36.4 36.4"><circle cx="18.2" cy="18.2" r="16.3" fill="none" stroke="#fff" stroke-width="3.7"/><path d="M12.2 13.6C12.6 10.3 15 8.6 18.1 8.6C21.3 8.6 23.4 10.6 23.4 13.3C23.4 16.9 18.6 17.6 18 21.8V24" fill="none" stroke="#fff" stroke-width="3.1"/><rect x="15.8" y="25" width="4.2" height="4.2" fill="#fff"/></svg>
<div class="b" style="left:2857px;top:9.3px;width:13.5px;height:13.5px;border-radius:50%;background:#5b5ef4"></div>
</div>
</body></html>
